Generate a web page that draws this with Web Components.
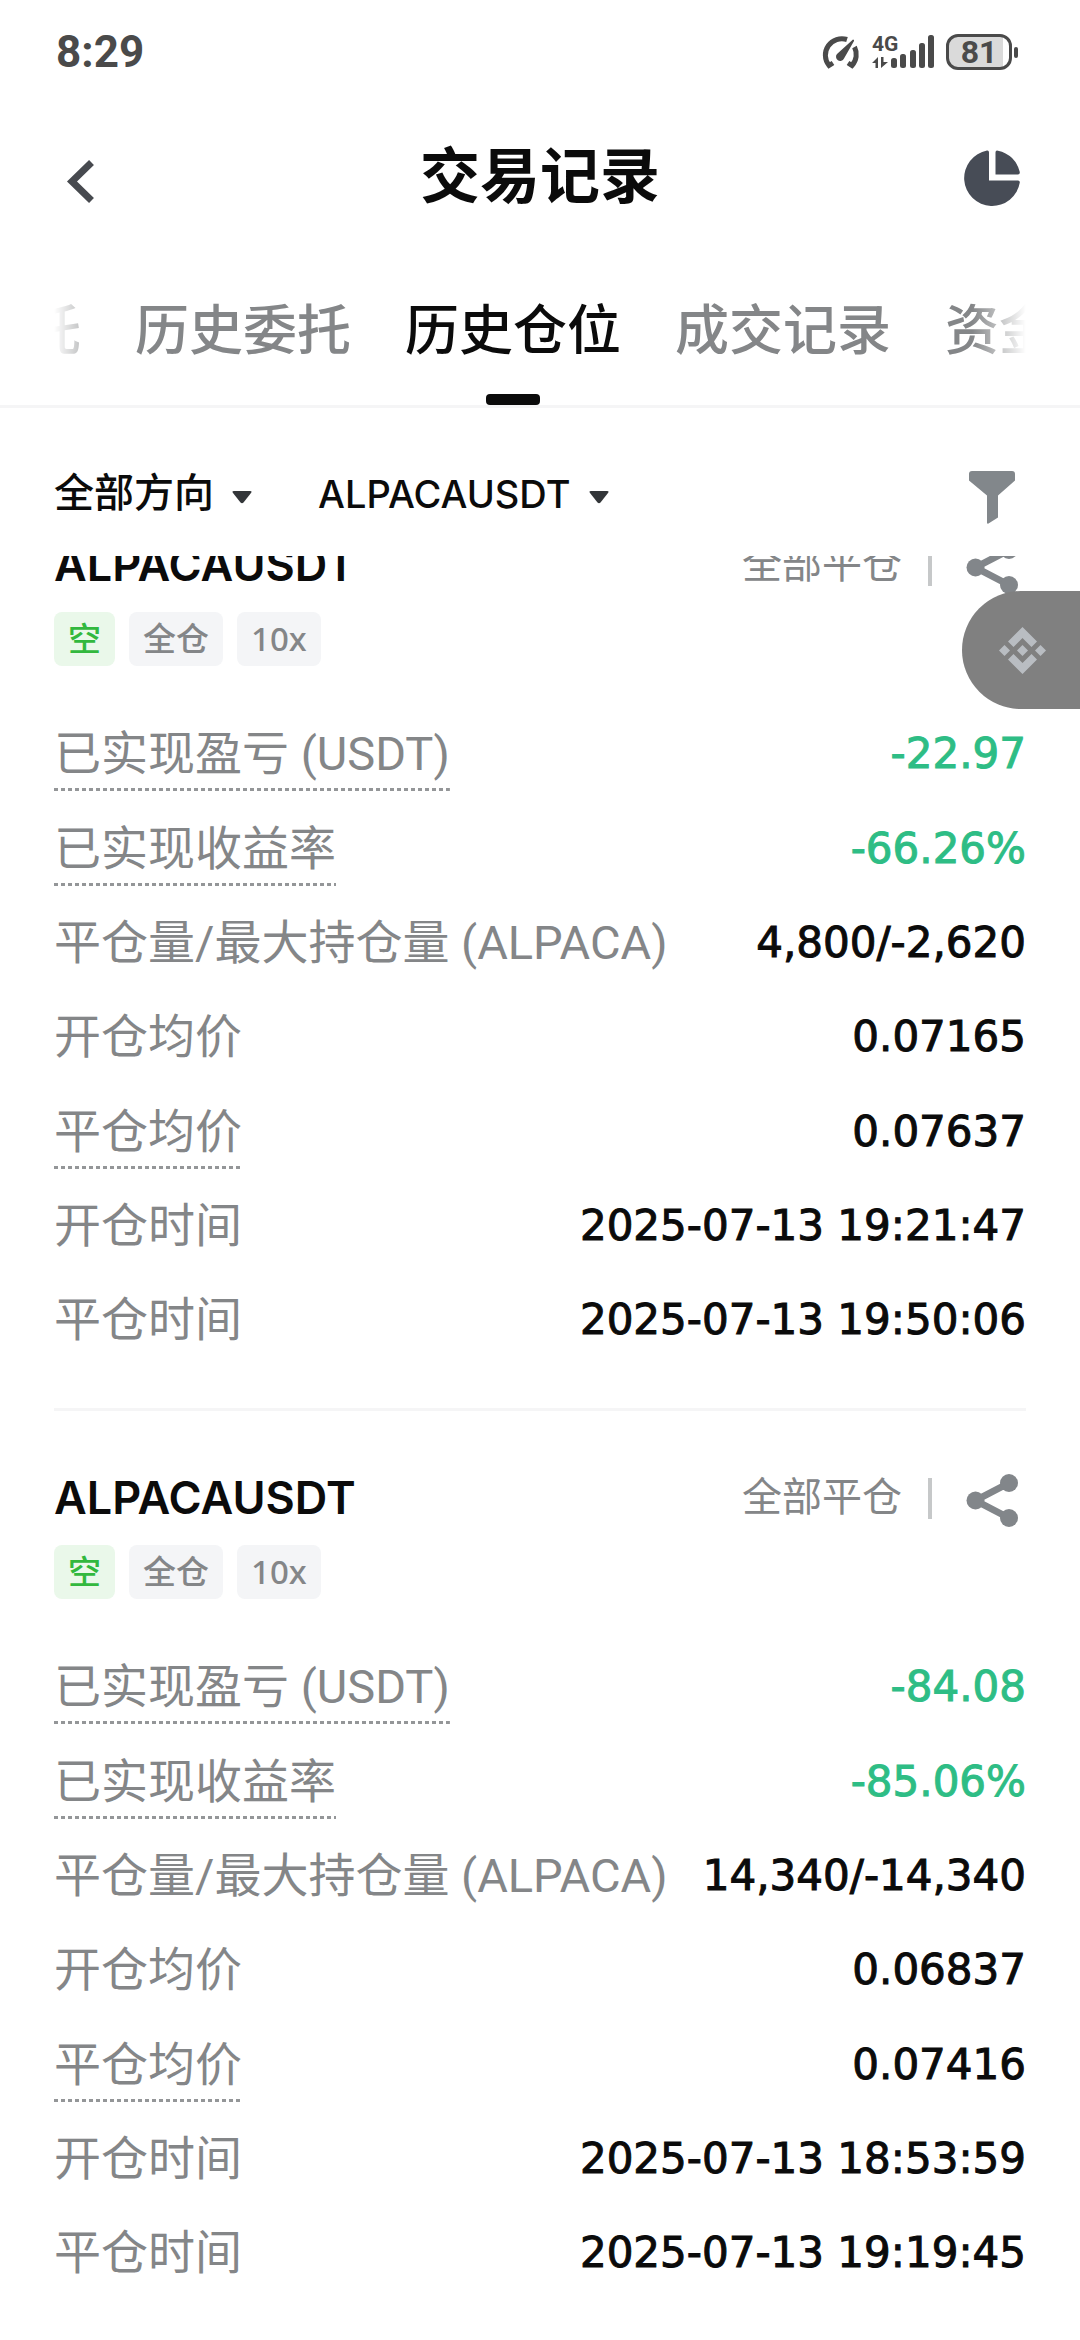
<!DOCTYPE html>
<html lang="zh-CN">
<head>
<meta charset="utf-8">
<meta name="viewport" content="width=device-width, initial-scale=1">
<title>交易记录</title>
<style>
    body {
        margin: 0;
        background: #fff;
        color: #0b0b0b;
        font-family: Roboto, "Noto Sans CJK SC", sans-serif;
        --muted: #848688;
        --line: #f5f5f6;
        --side: 54px;
        --icon: 68px;
    }
</style>
</head>
<body>
<history-page></history-page>

<script>
const define = (name, html, setup) => {
    const template = document.createElement('template');
    template.innerHTML = html;

    customElements.define(name, class extends HTMLElement {
        constructor() {
            super();
            this.attachShadow({ mode: 'open' });
            this.shadowRoot.appendChild(template.content.cloneNode(true));
        }

        connectedCallback() {
            if (setup) setup(this, this.shadowRoot);
        }
    });
};

define('status-bar', `
    <style>
        :host {
            display: flex;
            align-items: center;
            justify-content: space-between;
            height: 104px;
            padding: 0 62px 0 56px;
            color: #4a4a4a;
            font-weight: 700;
        }
        .clock { font-size: 44px; line-height: 52px; }
        .icons { display: flex; align-items: center; gap: 12px; }
        svg { display: block; overflow: visible; }
        .power { display: flex; align-items: center; gap: 2px; }
        .battery {
            box-sizing: border-box;
            width: 66px;
            height: 36px;
            border: 3px solid #4a4a4a;
            border-radius: 12px;
            background: linear-gradient(to right, #dadada 54px, #fff 54px);
            font-size: 32px;
            line-height: 30px;
            text-align: center;
        }
        .nub { width: 4px; height: 11px; border-radius: 2px; background: #4a4a4a; }
    </style>
    <span class="clock">8:29</span>
    <div class="icons">
        <svg width="40" height="36" viewBox="0 0 40 36" fill="none" stroke="#4a4a4a" stroke-width="5">
            <path d="M13 29l-4 2.5A16.500 16.500 0 0 1 27 5.500M34.500 13A16.500 16.500 0 0 1 32 31.500L28 29"/>
            <path d="M33 5.500q1.500 0 1 1.500L24 24.500a4.200 4.200 0 1 1-7-4.500z" fill="#4a4a4a" stroke="none"/>
        </svg>
        <svg width="62" height="36" viewBox="0 0 62 36" fill="#4a4a4a">
            <text x="0" y="17" font-size="21">4G</text>
            <path d="M0 29l6-6v11H3.500v-5zM9 23h2.500v5H16l-7 6z"/>
            <rect x="19" y="24" width="6" height="10" rx="2.500"/>
            <rect x="28" y="20" width="6" height="14" rx="2.500"/>
            <rect x="38" y="16" width="6" height="18" rx="2.500"/>
            <rect x="47" y="9" width="6" height="25" rx="2.500"/>
            <rect x="56" y="1" width="6" height="33" rx="2.500"/>
        </svg>
        <div class="power">
            <div class="battery">81</div>
            <div class="nub"></div>
        </div>
    </div>
`);

define('icon-button', `
    <style>
        :host { display: block; flex: none; }
        button {
            display: block;
            width: var(--icon);
            height: var(--icon);
            padding: 0;
            border: 0;
            background: none;
        }
        ::slotted(svg) { display: block; width: 100%; height: 100%; }
    </style>
    <button><slot></slot></button>
`, (host, root) => {
    root.querySelector('button').setAttribute('aria-label', host.getAttribute('label'));
});

define('page-header', `
    <style>
        :host {
            display: flex;
            align-items: center;
            justify-content: space-between;
            height: 148px;
            padding: 0 var(--side);
        }
        h1 { margin: 0; font-size: 60px; line-height: 80px; font-weight: 700; }
    </style>
    <icon-button label="返回">
        <svg viewBox="0 0 68 68"><path d="M37.500 18.500L18 37.500L37.500 56.500" fill="none" stroke="#474a4f" stroke-width="7"/></svg>
    </icon-button>
    <h1><slot></slot></h1>
    <icon-button label="统计">
        <svg viewBox="0 0 68 68" fill="#474c56">
            <path d="M31 8.500V36.500H60q2 0 1.800 2A28 28 0 1 1 29 6.500Q31 6.200 31 8.500z"/>
            <path d="M37.500 8.500Q37.500 6 40 6.700A28 28 0 0 1 61.800 28Q62 30.500 60 30.500H37.500z"/>
        </svg>
    </icon-button>
`);

define('tab-strip', `
    <style>
        :host { display: block; padding: 0 var(--side); border-bottom: 3px solid var(--line); }
        .scroller {
            display: flex;
            gap: 54px;
            overflow-x: auto;
            scrollbar-width: none;
            -webkit-mask-image: linear-gradient(to right, transparent, #000 54px, #000 calc(100% - 54px), transparent);
            mask-image: linear-gradient(to right, transparent, #000 54px, #000 calc(100% - 54px), transparent);
        }
        button {
            display: flex;
            flex: none;
            flex-direction: column;
            align-items: center;
            gap: 23px;
            padding: 41px 0 0;
            border: 0;
            background: none;
            color: var(--muted);
            font: 500 54px/78px Roboto, "Noto Sans CJK SC", sans-serif;
        }
        button::after { content: ""; width: 54px; height: 11px; border-radius: 4px; }
        button[aria-selected="true"] { color: #0b0b0b; }
        button[aria-selected="true"]::after { background: #0b0b0b; }
    </style>
    <div class="scroller" role="tablist"></div>
`, (host, root) => {
    const scroller = root.querySelector('.scroller');
    const active = host.getAttribute('active');
    host.getAttribute('tabs').split(',').forEach(name => {
        const button = document.createElement('button');
        button.setAttribute('role', 'tab');
        button.setAttribute('aria-selected', String(name === active));
        button.textContent = name;
        scroller.appendChild(button);
    });
    scroller.scrollLeft = Number(host.getAttribute('offset'));
});

define('filter-select', `
    <style>
        :host { display: flex; align-items: center; gap: 18px; }
        select {
            appearance: none;
            padding: 0;
            border: 0;
            background: none;
            color: #0b0b0b;
            font: 500 40px/60px Roboto, "Noto Sans CJK SC", sans-serif;
        }
        :host([latin]) select { font: 500 38px/60px Inter, sans-serif; }
        svg { display: block; width: 20px; height: 20px; }
    </style>
    <select><option></option></select>
    <svg viewBox="0 0 20 20"><path d="M2 7H18Q20.500 7 19 9L11.500 18.500Q10 20 8.500 18.500L1 9Q-.5 7 2 7z" fill="#333639"/></svg>
`, (host, root) => {
    root.querySelector('select').setAttribute('aria-label', host.getAttribute('label'));
    root.querySelector('option').textContent = host.getAttribute('value');
});

define('filter-bar', `
    <style>
        :host { display: flex; align-items: center; gap: 66px; padding: 52px var(--side) 28px; }
        icon-button { margin-left: auto; }
    </style>
    <filter-select label="方向" value="全部方向"></filter-select>
    <filter-select latin label="合约" value="ALPACAUSDT"></filter-select>
    <icon-button label="筛选">
        <svg viewBox="0 0 68 68"><path d="M14 11H54a3 3 0 0 1 3 3v6.500L40 35.500V57.500L30.500 63.500a1 1 0 0 1-1.500-1V35.500L11 20.500V14a3 3 0 0 1 3-3z" fill="#82878b"/></svg>
    </icon-button>
`);

define('tag-chip', `
    <style>
        :host {
            display: block;
            padding: 0 14px;
            border-radius: 8px;
            background: #f4f5f7;
            color: var(--muted);
            font-family: "Noto Sans", "Noto Sans CJK SC", sans-serif;
            font-size: 33px;
            line-height: 54px;
            font-weight: 500;
        }
        :host([short]) { background: #eaf8ea; color: #32b83e; }
    </style>
    <slot></slot>
`);

define('data-row', `
    <style>
        :host {
            display: flex;
            align-items: center;
            justify-content: space-between;
            height: 94px;
            white-space: nowrap;
        }
        :host([hint]) { height: 95px; }
        .label { color: var(--muted); font-size: 47px; line-height: 74px; }
        :host([hint]) .label {
            background: repeating-linear-gradient(to right, #949698 0 4px, transparent 4px 7px) bottom / 100% 3px no-repeat;
        }
        .value {
            font-family: "DejaVu Sans", sans-serif;
            font-size: 42px;
            line-height: 60px;
            -webkit-text-stroke: 1px currentColor;
        }
        :host([short]) .value { color: #2ebd85; }
    </style>
    <span class="label"></span>
    <span class="value"><slot></slot></span>
`, (host, root) => {
    root.querySelector('.label').textContent = host.getAttribute('label');
});

define('position-card', `
    <style>
        :host { display: block; padding: 53px 0 41px; border-bottom: 3px solid var(--line); }
        header { display: flex; align-items: center; gap: 26px; }
        h2 { flex: 1; margin: 0; font: 600 45px/60px Inter, sans-serif; }
        .state { color: var(--muted); font-size: 40px; line-height: 60px; }
        .bar { width: 4px; height: 41px; background: #c6c8c9; }
        .tags { display: flex; gap: 14px; margin: 13px 0 40px; }
    </style>
    <header>
        <h2></h2>
        <span class="state">全部平仓</span>
        <span class="bar"></span>
        <icon-button label="分享">
            <svg viewBox="0 0 68 68" fill="#82868a">
                <path d="M51 19L17.500 36.500L51 54" fill="none" stroke="#82868a" stroke-width="7"/>
                <circle cx="17.500" cy="36.500" r="9"/>
                <circle cx="51" cy="19" r="9"/>
                <circle cx="51" cy="54" r="9"/>
            </svg>
        </icon-button>
    </header>
    <div class="tags">
        <tag-chip short>空</tag-chip>
        <tag-chip>全仓</tag-chip>
        <tag-chip>10x</tag-chip>
    </div>
    <slot></slot>
`, (host, root) => {
    root.querySelector('h2').textContent = host.getAttribute('symbol');
});

define('float-button', `
    <style>
        /* sits over the list, docked to the right edge */
        :host { position: absolute; top: 35px; right: 0; }
        button {
            display: flex;
            align-items: center;
            width: 118px;
            height: 118px;
            padding: 0 0 0 37px;
            border: 0;
            border-radius: 59px 0 0 59px;
            background: #808080;
        }
        svg { width: 47px; height: 47px; }
    </style>
    <button aria-label="快捷入口">
        <svg viewBox="0 0 47 47" fill="#b9bdc2">
            <path d="M23.500 0L38 14.500L32.500 20L23.500 11L14.500 20L9 14.500z"/>
            <path d="M23.500 47L38 32.500L32.500 27L23.500 36L14.500 27L9 32.500z"/>
            <path d="M23.500 18L29 23.500L23.500 29L18 23.500z"/>
            <path d="M5.500 18L11 23.500L5.500 29L0 23.500z"/>
            <path d="M41.500 18L47 23.500L41.500 29L36 23.500z"/>
        </svg>
    </button>
`);

define('record-list', `
    <style>
        :host { display: block; position: relative; flex: 1; min-height: 0; }
        .scroller {
            height: 100%;
            box-sizing: border-box;
            padding: 0 var(--side);
            overflow-y: auto;
            scrollbar-width: none;
        }
    </style>
    <div class="scroller"><slot></slot></div>
    <float-button></float-button>
`, (host, root) => {
    // the cards have no height until they are upgraded, so wait for the slot
    root.querySelector('slot').addEventListener('slotchange', () => {
        root.querySelector('.scroller').scrollTop = Number(host.getAttribute('offset'));
    });
});

define('history-page', `
    <style>
        :host { display: flex; flex-direction: column; height: 100vh; }
    </style>
    <status-bar></status-bar>
    <page-header>交易记录</page-header>
    <tab-strip tabs="当前委托,历史委托,历史仓位,成交记录,资金流水" active="历史仓位" offset="189"></tab-strip>
    <filter-bar></filter-bar>
    <record-list offset="78">
        <position-card symbol="ALPACAUSDT">
            <data-row hint short label="已实现盈亏 (USDT)">-22.97</data-row>
            <data-row hint short label="已实现收益率">-66.26%</data-row>
            <data-row label="平仓量/最大持仓量 (ALPACA)">4,800/-2,620</data-row>
            <data-row label="开仓均价">0.07165</data-row>
            <data-row hint label="平仓均价">0.07637</data-row>
            <data-row label="开仓时间">2025-07-13 19:21:47</data-row>
            <data-row label="平仓时间">2025-07-13 19:50:06</data-row>
        </position-card>
        <position-card symbol="ALPACAUSDT">
            <data-row hint short label="已实现盈亏 (USDT)">-84.08</data-row>
            <data-row hint short label="已实现收益率">-85.06%</data-row>
            <data-row label="平仓量/最大持仓量 (ALPACA)">14,340/-14,340</data-row>
            <data-row label="开仓均价">0.06837</data-row>
            <data-row hint label="平仓均价">0.07416</data-row>
            <data-row label="开仓时间">2025-07-13 18:53:59</data-row>
            <data-row label="平仓时间">2025-07-13 19:19:45</data-row>
        </position-card>
    </record-list>
`);
</script>
</body>
</html>
